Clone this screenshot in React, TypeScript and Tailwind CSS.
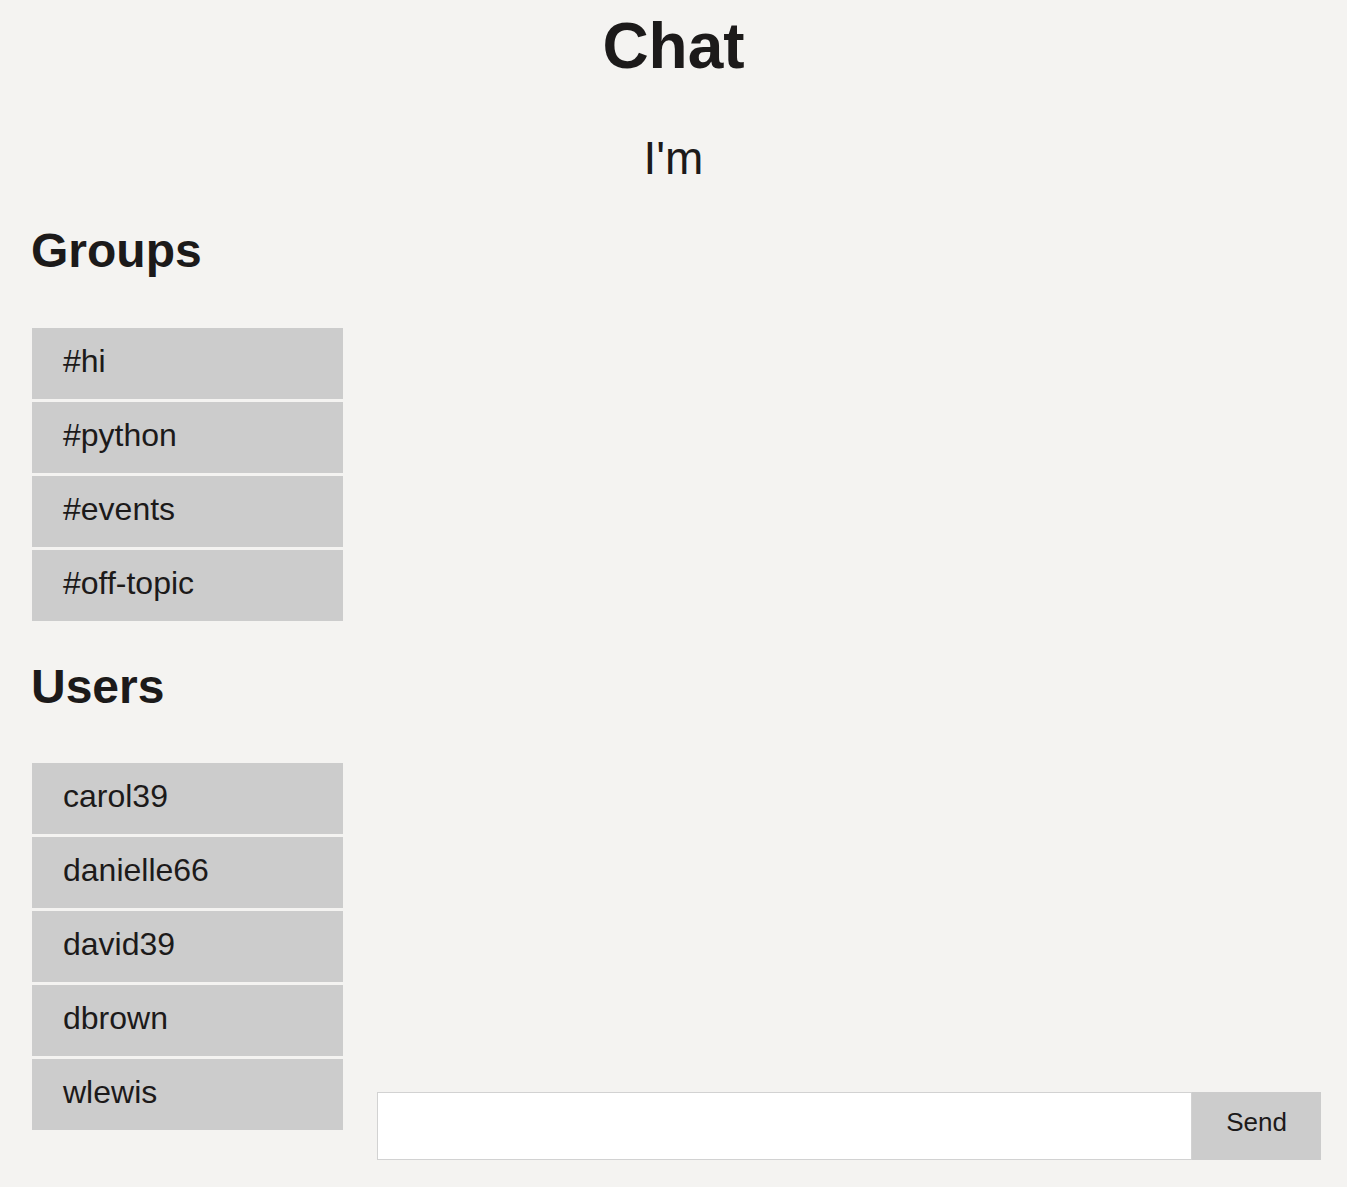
import { useState } from 'react';

const groups = ['#hi', '#python', '#events', '#off-topic'];
const users = ['carol39', 'danielle66', 'david39', 'dbrown', 'wlewis'];

const ListItem = ({ label }: { label: string }) => (
  <li className="h-[71px] bg-[#cccccc] pl-[31px] pt-[17px] text-[32px] leading-none text-[#1c1a1a]">
    {label}
  </li>
);

const App = () => {
  const [message, setMessage] = useState('');

  return (
    <div
      className="flex h-[1187px] flex-col bg-[#f4f3f1] text-[#1c1a1a]"
      style={{ fontFamily: '"Liberation Sans", Arial, sans-serif' }}
    >
      <h1 className="mt-[14px] text-center text-[64px] font-bold leading-none">Chat</h1>
      <p className="mt-[57px] text-center text-[46px] leading-none">I'm</p>

      <div className="flex flex-1 pl-[32px] pr-[26px]">
        <aside className="flex w-[311px] flex-col">
          <h2 className="mt-[46px] -ml-px text-[48px] font-bold leading-none">Groups</h2>
          <ul className="mt-[53px] flex flex-col gap-[3px]">
            {groups.map((g) => (
              <ListItem key={g} label={g} />
            ))}
          </ul>

          <h2 className="mt-[42px] -ml-px text-[48px] font-bold leading-none">Users</h2>
          <ul className="mt-[52px] flex flex-col gap-[3px]">
            {users.map((u) => (
              <ListItem key={u} label={u} />
            ))}
          </ul>
        </aside>

        <main className="ml-[34px] flex flex-1 flex-col justify-end pb-[27px]">
          <form className="flex h-[68px]" onSubmit={(e) => e.preventDefault()}>
            <input
              type="text"
              value={message}
              onChange={(e) => setMessage(e.target.value)}
              className="flex-1 border border-[#d2d2d2] bg-white px-3 text-[24px] outline-none"
            />
            <button
              type="submit"
              className="w-[129px] bg-[#cccccc] pb-[8px] text-[26px] leading-none text-[#1c1a1a]"
            >
              Send
            </button>
          </form>
        </main>
      </div>
    </div>
  );
};

export default App;
